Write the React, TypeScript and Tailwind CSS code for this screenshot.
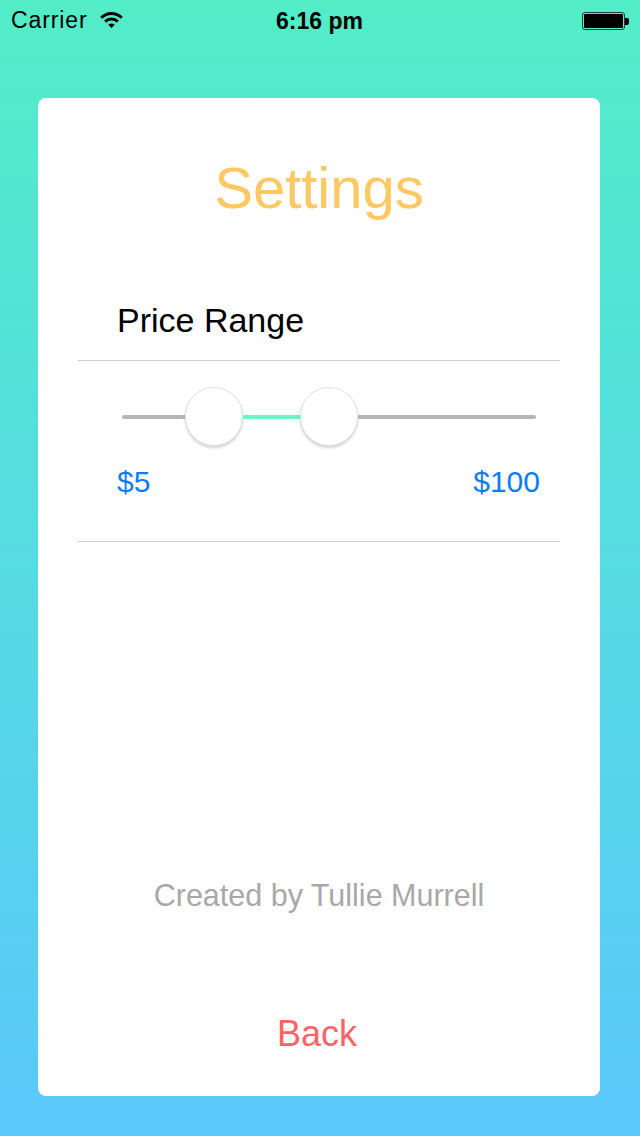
const FONT = { fontFamily: '"Liberation Sans", Arial, sans-serif' }

const WifiIcon = () => (
  <svg width="23" height="16" viewBox="0 0 23 16" className="mt-[12px] ml-[12px]">
    <path d="M1.25 5.75 A14.5 14.5 0 0 1 21.75 5.75" fill="none" stroke="#000" strokeWidth="3" />
    <path d="M5.14 9.64 A9 9 0 0 1 17.86 9.64" fill="none" stroke="#000" strokeWidth="3" />
    <path d="M11.5 16 L8.32 12.82 A4.5 4.5 0 0 1 14.68 12.82 Z" fill="#000" />
  </svg>
)

const Battery = () => (
  <div className="mt-[12px] mr-[11px] flex items-center self-start">
    <div className="h-[18px] w-[43px] rounded-[3px] border border-[#1f3d35] p-px">
      <div className="h-full w-full rounded-[1px] bg-black" />
    </div>
    <div className="h-[7px] w-[4px] rounded-r-[2px] bg-black" />
  </div>
)

const StatusBar = () => (
  <div className="grid h-10 grid-cols-3 text-black">
    <div className="flex items-start">
      <span className="mt-[9px] ml-[11px] text-[23px] leading-none tracking-[0.9px]">Carrier</span>
      <WifiIcon />
    </div>
    <div className="flex items-start justify-center">
      <span className="mt-[10px] ml-[-1px] text-[23px] font-bold leading-none">6:16 pm</span>
    </div>
    <div className="flex items-start justify-end">
      <Battery />
    </div>
  </div>
)

const Thumb = () => (
  <div className="h-[59px] w-[58px] shrink-0 rounded-full border border-[#e2e2e2] bg-white shadow-[0_2px_3px_rgba(0,0,0,0.18)]" />
)

const RangeSlider = () => (
  <div className="mt-[26px] flex h-[59px] items-center pl-[44px] pr-[24px]">
    <div className="h-[4px] w-[63px] shrink-0 rounded-l-full bg-[#b6b6b6]" />
    <Thumb />
    <div className="h-[4px] w-[57px] shrink-0 bg-[#66f8c8]" />
    <Thumb />
    <div className="h-[4px] flex-1 rounded-r-full bg-[#b6b6b6]" />
  </div>
)

const App = () => {
  return (
    <div
      className="flex h-[1136px] w-[640px] flex-col bg-gradient-to-b from-[#52edc7] to-[#5ac8fb]"
      style={FONT}
    >
      <StatusBar />
      <div className="mt-[58px] ml-[38px] flex h-[998px] w-[562px] flex-col rounded-[8px] bg-white px-10">
        <h1 className="mt-[61px] text-center text-[58px] leading-none text-[#fec862]">Settings</h1>

        <p className="mt-[86px] pl-[39px] text-[34px] leading-none text-black">Price Range</p>
        <div className="mt-[23px] h-px bg-[#cccccc]" />

        <RangeSlider />

        <div className="mt-[21px] flex justify-between pl-[39px] pr-[20px] text-[30px] leading-none text-[#0a7cff]">
          <span>$5</span>
          <span>$100</span>
        </div>
        <div className="mt-[44px] h-px bg-[#cccccc]" />

        <p className="mt-[338px] text-center text-[30.5px] leading-none text-[#a8a8a8]">
          Created by Tullie Murrell
        </p>

        <button type="button" className="mt-[105px] ml-[-4px] self-center text-[36px] leading-none text-[#fe6363]">
          Back
        </button>
      </div>
    </div>
  )
}

export default App
